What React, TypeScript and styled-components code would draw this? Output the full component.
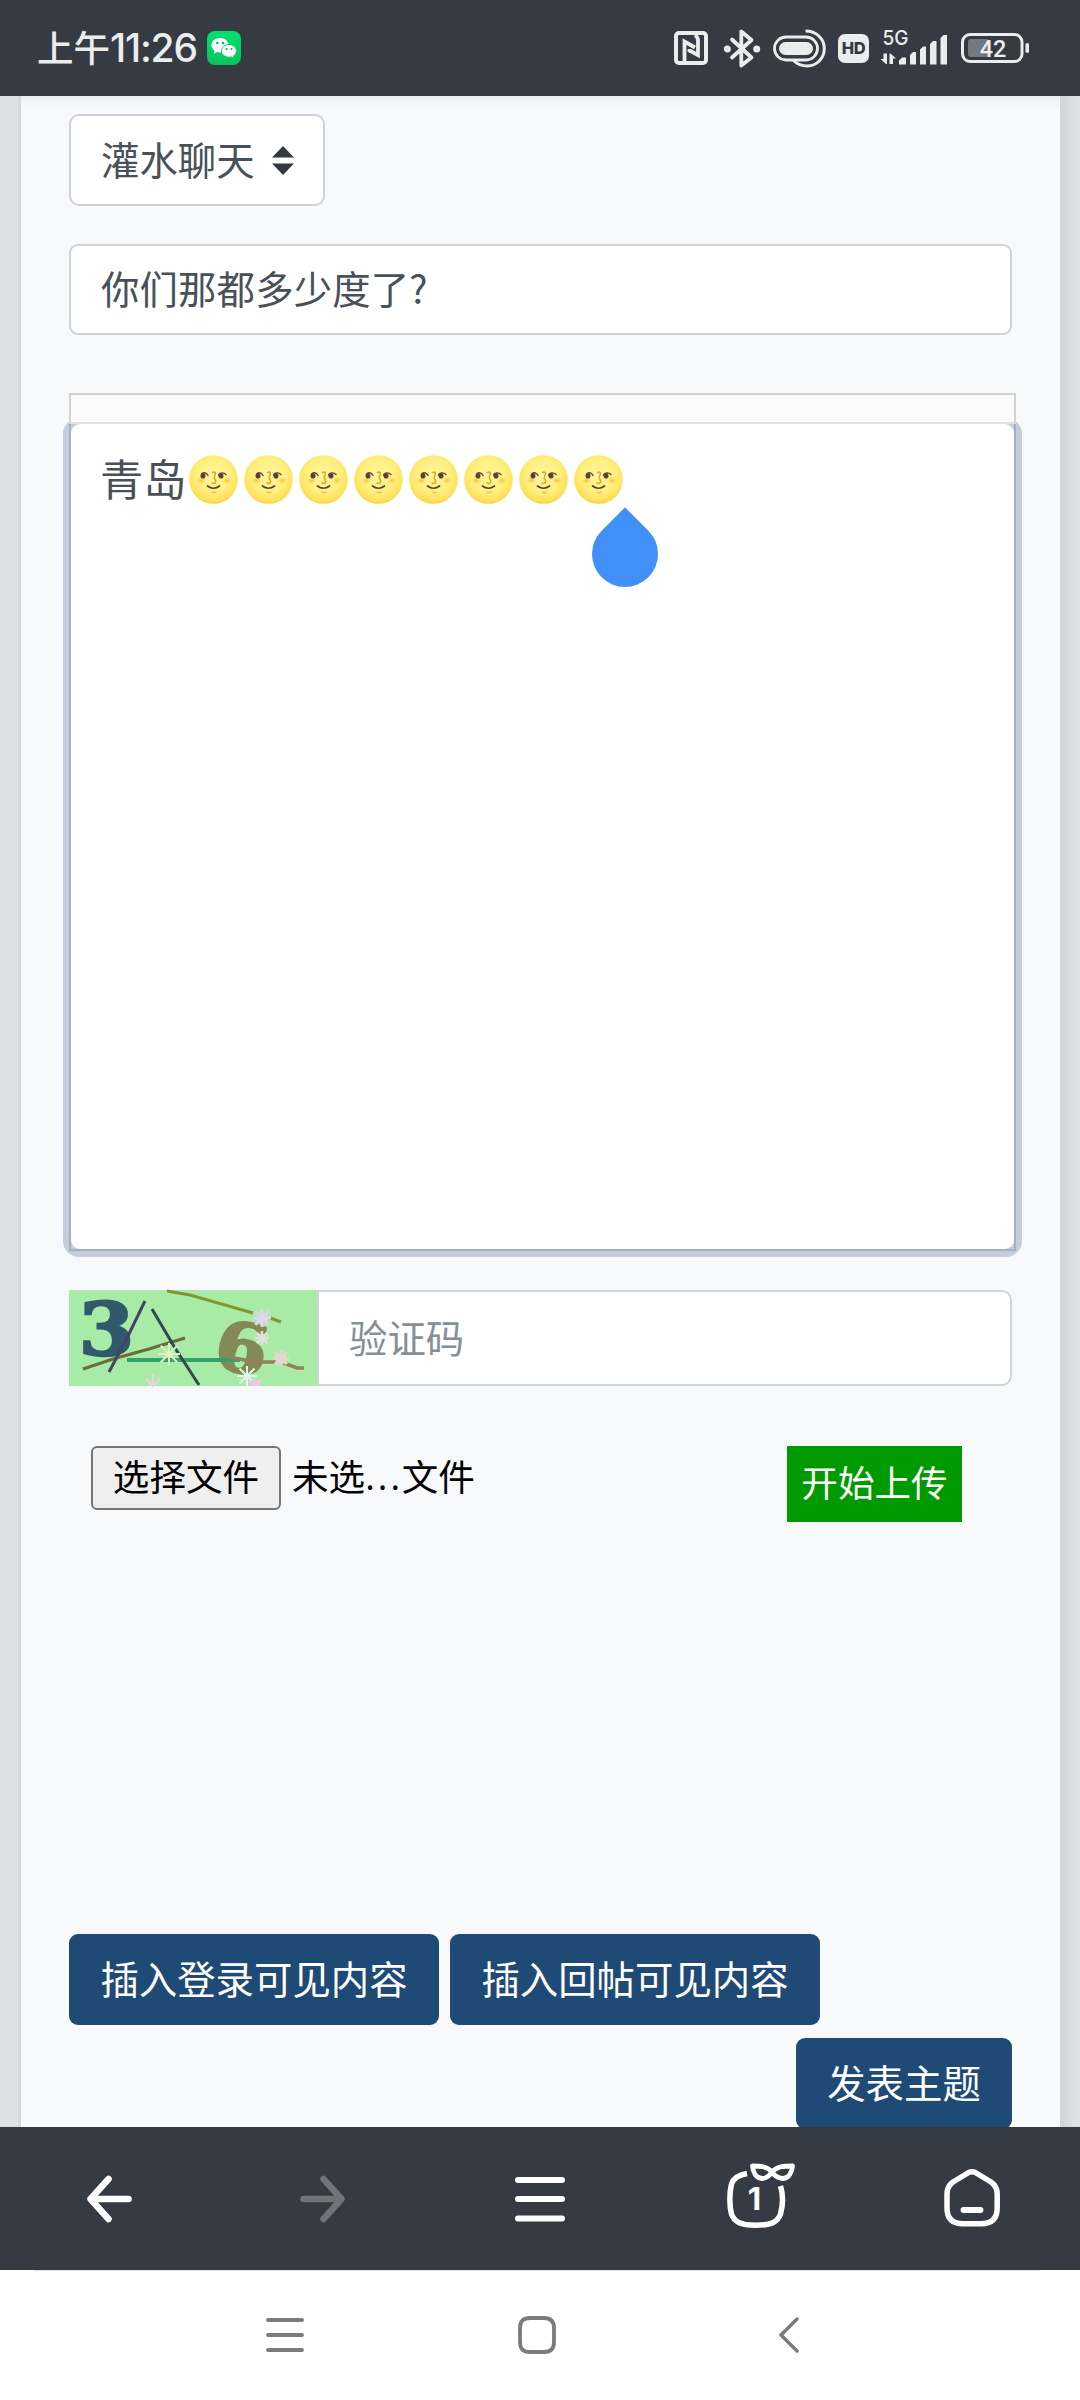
import React from "react";
import styled, { createGlobalStyle } from "styled-components";

const cjk = `"Noto Sans CJK SC", sans-serif`;

const GlobalStyle = createGlobalStyle`
  * { box-sizing: border-box; }
  body { margin: 0; background: #fff; font-family: ${cjk}; }
  svg { display: block; flex: none; }
`;

const Screen = styled.div`
  width: 1080px;
  height: 2400px;
  display: flex;
  flex-direction: column;
  overflow: hidden;
`;

const StatusBar = styled.header`
  height: 96px;
  flex: none;
  display: flex;
  align-items: center;
  padding: 0 51px 0 37px;
  background: #363a42;
  color: #ebecec;
`;

const Clock = styled.div`
  display: flex;
  align-items: center;
  width: 170px;
  padding-bottom: 2px;
  font-weight: 500;
  line-height: 48px;
  white-space: nowrap;
`;

const Meridiem = styled.span`
  font-size: 36.5px;
`;

const Digits = styled.span`
  font-family: Inter, sans-serif;
  font-size: 39px;
  letter-spacing: -1.2px;
  padding-top: 1px;
`;

const StatusIcons = styled.div`
  margin-left: auto;
  display: flex;
  align-items: center;

  svg { overflow: visible; }
`;

const IconSlot = styled.div<{ $gap: number }>`
  margin-left: ${(p) => p.$gap}px;
`;

const Page = styled.main`
  height: 2031px;
  flex: none;
  display: flex;
  overflow: hidden;
  background: linear-gradient(90deg, #dde0e5 0 1000px, #d3d7db 1000px 1064px, #dde1e5 1074px);
  padding: 0 20px 0 18px;
`;

const Card = styled.section`
  flex: 1;
  border-left: 3px solid #d6d9de;
  background: linear-gradient(180deg, #eeeff1 0, #f3f4f6 6px, #f8f9fb 14px);
  padding: 18px 44px 0 48px;
  display: flex;
  flex-direction: column;

  & > * { flex: none; }
`;

const fieldText = `
  font-size: 38.4px;
  color: #495057;
  white-space: nowrap;
`;

const SelectBox = styled.div`
  width: 256px;
  height: 92px;
  display: flex;
  align-items: center;
  gap: 17px;
  padding-left: 30px;
  border: 2px solid #ced1d9;
  border-radius: 10px;
  background: #fff;
  ${fieldText}
`;

const Label = styled.span`
  padding-bottom: 5px;
`;

const TitleInput = styled.div`
  width: 943px;
  height: 91px;
  margin-top: 38px;
  display: flex;
  align-items: center;
  padding-left: 30px;
  border: 2px solid #ced3d9;
  border-radius: 9px;
  background: #fff;
  letter-spacing: 0.15px;
  ${fieldText}
`;

const Editor = styled.div`
  width: 947px;
  margin-top: 58px;
`;

const EditorToolbar = styled.div`
  position: relative;
  z-index: 1;
  height: 31px;
  border: 2px solid #d2d3d3;
  border-bottom-color: #e1e1e1;
  background: #fbfbfb;
`;

const FocusRing = styled.div`
  margin: -6px -6px 0;
  padding: 6px;
  border-radius: 16px;
  background: #c3cddb;
`;

const EditorFrame = styled.div`
  height: 827px;
  border: solid #a6b0bd;
  border-width: 0 2px 2px;
`;

const EditorArea = styled.div`
  position: relative;
  height: 100%;
  border-radius: 9px;
  background: #fff;
  padding: 23px 29px;
`;

const EditorLine = styled.div`
  height: 64px;
  display: flex;
  align-items: center;
  font-size: 43.2px;
  color: #495057;
`;

const Moons = styled.div`
  display: flex;
  margin-left: 3px;
  gap: 5.9px;
`;

const CursorHandle = styled.div`
  position: absolute;
  left: 521px;
  top: 97px;
  width: 66px;
  height: 66px;
  border-radius: 0 50% 50% 50%;
  transform: rotate(45deg);
  background: #4190f7;
`;

const CaptchaRow = styled.div`
  width: 943px;
  height: 96px;
  margin-top: 33px;
  display: flex;

  svg { overflow: visible; }
`;

const CaptchaInput = styled.div`
  flex: 1;
  margin-left: -1px;
  display: flex;
  align-items: center;
  padding-left: 30px;
  border: 2px solid #ced4da;
  border-radius: 0 10px 10px 0;
  background: #fff;
  font-size: 38.4px;
  color: #868e96;
`;

const UploadRow = styled.div`
  margin-top: 60px;
  height: 76px;
  width: 871px;
  margin-left: 22px;
  display: flex;
  align-items: flex-start;
  font-size: 36.6px;
  color: #000;
`;

const FileButton = styled.div`
  width: 190px;
  height: 64px;
  display: flex;
  align-items: center;
  justify-content: center;
  border: 2px solid #767676;
  border-radius: 6px;
  background: #efefef;
  white-space: nowrap;
`;

const FileName = styled.div`
  margin-left: 11px;
  height: 64px;
  display: flex;
  align-items: center;
  padding-bottom: 5px;
  white-space: nowrap;
`;

const Dots = styled.span`
  font-family: "Open Sans", sans-serif;
  width: 36.6px;
  letter-spacing: 3px;
`;

const StartUpload = styled.div`
  margin-left: auto;
  width: 175px;
  height: 76px;
  display: flex;
  align-items: center;
  justify-content: center;
  background: #009900;
  color: #fff;
  white-space: nowrap;
`;

const InsertRow = styled.div`
  margin-top: 412px;
  display: flex;
  gap: 11px;
`;

const SubmitRow = styled.div`
  width: 943px;
  margin-top: 13px;
  display: flex;
  justify-content: flex-end;
`;

const PrimaryButton = styled.div<{ $width: number }>`
  width: ${(p) => p.$width}px;
  height: 91px;
  display: flex;
  align-items: center;
  justify-content: center;
  border-radius: 9px;
  background: #204a76;
  color: #fff;
  font-size: 38.4px;
  white-space: nowrap;
`;

const BrowserBar = styled.nav`
  height: 143px;
  flex: none;
  display: grid;
  grid-template-columns: repeat(5, 216px);
  align-items: center;
  justify-items: center;
  background: #363a42;
`;

const SystemBar = styled.nav`
  flex: 1;
  display: grid;
  grid-template-columns: repeat(3, 252px);
  justify-content: center;
  justify-items: center;
  align-items: center;
  background: linear-gradient(#e2e3e4, #e2e3e4) 34px 0 / 1006px 1px no-repeat #fff;
  padding-right: 7px;
`;

const WeChat = () => (
  <svg width="34" height="34" viewBox="0 0 34 34">
    <defs>
      <linearGradient id="wx" x1="0" y1="0" x2="0" y2="1">
        <stop offset="0" stopColor="#04df72" />
        <stop offset="1" stopColor="#08c45e" />
      </linearGradient>
    </defs>
    <rect width="34" height="34" rx="8" fill="url(#wx)" />
    <path d="M13 7c-4.800 0-8.500 3.100-8.500 7.100 0 2.300 1.200 4.300 3.100 5.600L7 22.800l3.300-1.700c1 .2 1.800.3 2.700.3 4.800 0 8.700-3.200 8.700-7.200S17.800 7 13 7z" fill="#fff" />
    <path d="M22 13.500c-4.200 0-7.400 2.900-7.400 6.400s3.200 6.300 7.400 6.300c.9 0 1.700-.1 2.400-.3l2.700 1.500-.5-2.600c1.700-1.200 2.800-2.900 2.800-4.900 0-3.500-3.200-6.400-7.400-6.400z" fill="#fff" stroke="#06cf67" strokeWidth="1" />
    <g fill="#07c160">
      <circle cx="10.300" cy="12" r="1.300" /><circle cx="16" cy="12" r="1.300" />
      <circle cx="19.600" cy="18" r="1.100" /><circle cx="24.500" cy="18" r="1.100" />
    </g>
  </svg>
);

const Nfc = () => (
  <svg width="34" height="34" viewBox="0 0 34 34" fill="none" stroke="#ebecec">
    <rect x="2" y="2" width="30" height="30" rx="3" strokeWidth="4" />
    <path d="M10.500 30V10.500L21 16.500" strokeWidth="3.800" />
    <path d="M15.500 18v1.500L24 24V9.500c0-3-1-4-3-5.500" strokeWidth="3.800" />
  </svg>
);

const Bluetooth = () => (
  <svg width="36" height="39" viewBox="0 0 36 39" fill="none" stroke="#ebecec" strokeWidth="3.800" strokeLinecap="round" strokeLinejoin="round">
    <path d="M8 10.500L27.500 28.500L17.300 36.500V2.500L27.500 11L8 28.500" />
    <circle cx="3.300" cy="20" r="1.600" /><circle cx="32.700" cy="20" r="1.600" />
  </svg>
);

const PillRing = () => (
  <svg width="53" height="39" viewBox="0 0 53 39" fill="none" stroke="#ebecec">
    <rect x="1.500" y="8" width="43" height="23" rx="11.500" strokeWidth="2.800" />
    <rect x="6" y="13" width="34" height="13" rx="6.500" fill="#ebecec" stroke="none" />
    <path d="M32.500 2C43 2 51.300 9.500 51.300 19.500C51.300 29.500 43.500 37 34.500 37C28 37 23.500 34.500 20.500 31.500" strokeWidth="3" />
  </svg>
);

const Hd = () => (
  <svg width="31" height="29" viewBox="0 0 31 29">
    <rect width="31" height="29" rx="7" fill="#ebecec" />
    <text x="15.500" y="20.300" textAnchor="middle" fontFamily="Inter, sans-serif" fontWeight="800" fontSize="16.500" letterSpacing="-0.500" fill="#363a42">HD</text>
  </svg>
);

const Signal = () => (
  <svg width="67" height="38" viewBox="0 0 67 38" fill="#ebecec">
    <text x="2.500" y="15.500" fontFamily="Inter, sans-serif" fontWeight="500" fontSize="20.500" textLength="26" lengthAdjust="spacingAndGlyphs">5G</text>
    <path d="M7 24.500V35h-1L0.500 30H3.500V24.500zM9.500 35V24.500h1l5.500 5h-3V35z" />
    <path d="M19 35.500v-4l3-3h4v7zM30 35.500V26l3-3h3v12.500zM40 35.500V20.500l3-3h3v18zM50 35.500V15l3-3h3.500v23.500zM60.500 35.500V9l3-3H67v29.500z" />
  </svg>
);

const Battery = () => (
  <svg width="68" height="30" viewBox="0 0 68 30">
    <rect x="1.500" y="1.500" width="59.500" height="27" rx="7.500" fill="none" stroke="#ebecec" strokeWidth="3" />
    <rect x="7" y="6" width="21" height="18" rx="3" fill="#74777b" />
    <text x="32" y="23.700" textAnchor="middle" fontFamily="Roboto, sans-serif" fontWeight="500" fontSize="23.500" fill="#ebecec">42</text>
    <rect x="64.500" y="10" width="3.500" height="10" rx="1.700" fill="#ebecec" />
  </svg>
);

const SortArrows = () => (
  <svg width="22" height="29" viewBox="0 0 22 29" fill="#343a40">
    <path d="M0 11.500L11 0L22 11.500zM0 17.500H22L11 29z" />
  </svg>
);

const Moon = () => (
  <svg width="49" height="49" viewBox="0 0 49 49">
    <defs>
      <radialGradient id="moon" cx="0.5" cy="0.42" r="0.6">
        <stop offset="0" stopColor="#fff6a6" />
        <stop offset="0.6" stopColor="#ffef7c" />
        <stop offset="0.88" stopColor="#fde058" />
        <stop offset="1" stopColor="#f8c63c" />
      </radialGradient>
      <radialGradient id="blush">
        <stop offset="0" stopColor="#fbb52c" stopOpacity="0.8" />
        <stop offset="1" stopColor="#fbc02d" stopOpacity="0" />
      </radialGradient>
    </defs>
    <circle cx="24.500" cy="24.500" r="24.300" fill="url(#moon)" />
    <ellipse cx="12.500" cy="25.500" rx="5" ry="3.500" fill="url(#blush)" />
    <ellipse cx="38" cy="25.500" rx="5" ry="3.500" fill="url(#blush)" />
    <g fill="none" strokeLinecap="round">
      <path d="M13 18.500c2-1.500 4.500-1 6 2M29.500 20c1-2.500 5-3 7.500 -.5" stroke="#5d4037" strokeWidth="1.400" />
      <path d="M23.500 17.500c4-1.500 3 2 1.800 4.500c-.8 2 2.700 3.500 1.200 5.500c-1 1.300-2.500 1-3.500 .5" stroke="#e0ae16" strokeWidth="1.600" />
      <path d="M18.500 31c3.500 3 8.500 3 12 0" stroke="#5d4037" strokeWidth="1.700" />
      <path d="M23.500 37c1 .8 2.500 .8 3.500 0" stroke="#f6bd36" strokeWidth="1.500" />
    </g>
    <ellipse cx="14" cy="20.700" rx="2.500" ry="2.800" fill="#5d4037" />
    <ellipse cx="32" cy="20.700" rx="2.500" ry="2.800" fill="#5d4037" />
  </svg>
);

const Flake = ({ x, y, r, c, w = 2 }: { x: number; y: number; r: number; c: string; w?: number }) => (
  <path
    d={`M${x} ${y - r}V${y + r}M${x - r} ${y}H${x + r}M${x - r * 0.75} ${y - r * 0.75}L${x + r * 0.75} ${y + r * 0.75}M${x + r * 0.75} ${y - r * 0.75}L${x - r * 0.75} ${y + r * 0.75}`}
    stroke={c}
    strokeWidth={w}
  />
);

const Captcha = () => (
  <svg width="249" height="96" viewBox="0 0 249 96" fill="none">
    <rect width="249" height="96" fill="#a7eba6" />
    <g fontFamily='"DejaVu Serif", "Liberation Serif", serif' fontWeight="700">
      <text x="10" y="64.500" fontSize="73" fill="#305a6c" stroke="#305a6c" strokeWidth="2.500" textLength="55" lengthAdjust="spacingAndGlyphs">3</text>
      <text x="147" y="82" fontSize="68" fill="#838a56" stroke="#838a56" strokeWidth="2.500" textLength="52" lengthAdjust="spacingAndGlyphs" transform="rotate(12 172 58)">6</text>
    </g>
    <path d="M98 1L121 5L184 23M201 28L212 32" stroke="#83982b" strokeWidth="3" />
    <path d="M14 79L44 69L80 59L116 48" stroke="#6b6e38" strokeWidth="3" />
    <path d="M58 70H171" stroke="#35a06c" strokeWidth="4" />
    <path d="M160 67L186 72H212L228 78H235" stroke="#94805a" strokeWidth="3.500" />
    <path d="M76 11L58 48L40 82" stroke="#434467" strokeWidth="3" />
    <path d="M83 19L106 58L130 95" stroke="#304a50" strokeWidth="3" />
    <Flake x={100} y={64} r={11} c="#e0f2c0" />
    <path d="M84 84V96M77 89L84 96L91 89" stroke="#e5d6dc" strokeWidth="2.500" />
    <Flake x={193} y={28} r={9} c="#ddd6ec" w={3} />
    <circle cx="193" cy="28" r="5" fill="#ddd6ec" />
    <Flake x={193} y={48} r={7} c="#e2dfdc" w={2.5} />
    <circle cx="193" cy="48" r="4" fill="#e2dfdc" />
    <Flake x={212} y={68} r={8} c="#e1d8cd" w={3} />
    <circle cx="212" cy="69" r="5.500" fill="#e1d8cd" />
    <Flake x={178} y={86} r={10} c="#e0f5f0" />
    <path d="M179 92q4-4 7-1q4-3 7 0q-1 3-4 5h-6q-3-2-4-4z" fill="#f3c3ed" />
  </svg>
);

const ArrowLeft = () => (
  <svg width="216" height="60" viewBox="0 0 216 60" fill="none" stroke="#fff" strokeWidth="6.500" strokeLinecap="round" strokeLinejoin="round">
    <path d="M108.500 10L90.500 30L108.500 50M92 30H128.500" />
  </svg>
);

const ArrowRight = () => (
  <svg width="216" height="60" viewBox="216 0 216 60" fill="none" stroke="#707478" strokeWidth="6.500" strokeLinecap="round" strokeLinejoin="round">
    <path d="M323.500 10L341.500 30L323.500 50M340 30H303.500" />
  </svg>
);

const Menu = () => (
  <svg width="50" height="60" viewBox="0 0 50 60" stroke="#fff" strokeWidth="6" strokeLinecap="round">
    <path d="M3 11H47M3 30H47M3 49.500H47" />
  </svg>
);

const TabCount = () => (
  <svg width="216" height="80" viewBox="648 2159 216 80" fill="none" stroke="#fff" strokeWidth="5.500">
    <path d="M747 2173.500C738 2175 733.500 2178 731.500 2184C729.300 2193 729.300 2206 731.500 2214C734 2221.500 740 2225.200 756 2225.200C772 2225.200 778 2221.500 780.500 2214C783 2205 783 2194 780.500 2186" />
    <path d="M752.500 2166C760 2166 767 2166 772 2172C777 2166 784 2166 792.500 2166C792 2172 789 2178.500 783 2178.500C777 2178.500 775 2175.500 772 2172.500C769 2175.500 767 2178.500 762 2178.500C756 2178.500 753 2172 752.500 2166Z" strokeWidth="4.800" strokeLinejoin="round" />
    <text x="754.500" y="2210" textAnchor="middle" fill="#fff" stroke="none" fontFamily="Inter, sans-serif" fontWeight="700" fontSize="31">1</text>
  </svg>
);

const Home = () => (
  <svg width="216" height="80" viewBox="864 2159 216 80" fill="none" stroke="#fff" strokeWidth="5.500" strokeLinecap="round" strokeLinejoin="round">
    <path d="M967 2173.500Q972 2170 977 2173.500L991 2182Q997.200 2186.500 997.200 2194V2208Q997.200 2223.700 981 2223.700H963Q947 2223.700 947 2208V2194Q947 2186.500 953 2182Z" />
    <path d="M963.500 2210H980.500" strokeWidth="5.800" />
  </svg>
);

const Recents = () => (
  <svg width="38" height="40" viewBox="0 0 38 40" stroke="#7b7b7b" strokeWidth="3.800" strokeLinecap="round">
    <path d="M2 5H36M2 20H36M2 35H36" />
  </svg>
);

const HomeSquare = () => (
  <svg width="38" height="38" viewBox="0 0 38 38" fill="none" stroke="#7b7b7b" strokeWidth="3.800">
    <path d="M12 2H26Q36 2 36 12V26Q36 36 26 36H12Q2 36 2 26V12Q2 2 12 2Z" />
  </svg>
);

const BackChevron = () => (
  <svg width="20" height="36" viewBox="0 0 20 36" fill="none" stroke="#7b7b7b" strokeWidth="3.500" strokeLinecap="round" strokeLinejoin="round">
    <path d="M18 2L2 18L18 34" />
  </svg>
);

const statusIcons = [
  { key: "nfc", gap: 0, el: <Nfc /> },
  { key: "bt", gap: 16, el: <Bluetooth /> },
  { key: "ring", gap: 13, el: <PillRing /> },
  { key: "hd", gap: 12, el: <Hd /> },
  { key: "signal", gap: 11, el: <Signal /> },
  { key: "battery", gap: 14, el: <Battery /> },
];

export default function App() {
  return (
    <Screen>
      <GlobalStyle />
      <StatusBar>
        <Clock>
          <Meridiem>上午</Meridiem>
          <Digits>11:26</Digits>
        </Clock>
        <WeChat />
        <StatusIcons>
          {statusIcons.map((i) => (
            <IconSlot key={i.key} $gap={i.gap}>{i.el}</IconSlot>
          ))}
        </StatusIcons>
      </StatusBar>
      <Page>
        <Card>
          <SelectBox>
            <Label>灌水聊天</Label>
            <SortArrows />
          </SelectBox>
          <TitleInput><Label>你们那都多少度了?</Label></TitleInput>
          <Editor>
            <EditorToolbar />
            <FocusRing>
              <EditorFrame>
                <EditorArea>
                  <EditorLine>
                    <Label>青岛</Label>
                    <Moons>
                      {Array.from({ length: 8 }, (_, i) => <Moon key={i} />)}
                    </Moons>
                  </EditorLine>
                  <CursorHandle />
                </EditorArea>
              </EditorFrame>
            </FocusRing>
          </Editor>
          <CaptchaRow>
            <Captcha />
            <CaptchaInput><Label>验证码</Label></CaptchaInput>
          </CaptchaRow>
          <UploadRow>
            <FileButton><Label>选择文件</Label></FileButton>
            <FileName>未选<Dots>...</Dots>文件</FileName>
            <StartUpload><Label>开始上传</Label></StartUpload>
          </UploadRow>
          <InsertRow>
            <PrimaryButton $width={370}><Label>插入登录可见内容</Label></PrimaryButton>
            <PrimaryButton $width={370}><Label>插入回帖可见内容</Label></PrimaryButton>
          </InsertRow>
          <SubmitRow>
            <PrimaryButton $width={216}><Label>发表主题</Label></PrimaryButton>
          </SubmitRow>
        </Card>
      </Page>
      <BrowserBar>
        <ArrowLeft />
        <ArrowRight />
        <Menu />
        <TabCount />
        <Home />
      </BrowserBar>
      <SystemBar>
        <Recents />
        <HomeSquare />
        <BackChevron />
      </SystemBar>
    </Screen>
  );
}
